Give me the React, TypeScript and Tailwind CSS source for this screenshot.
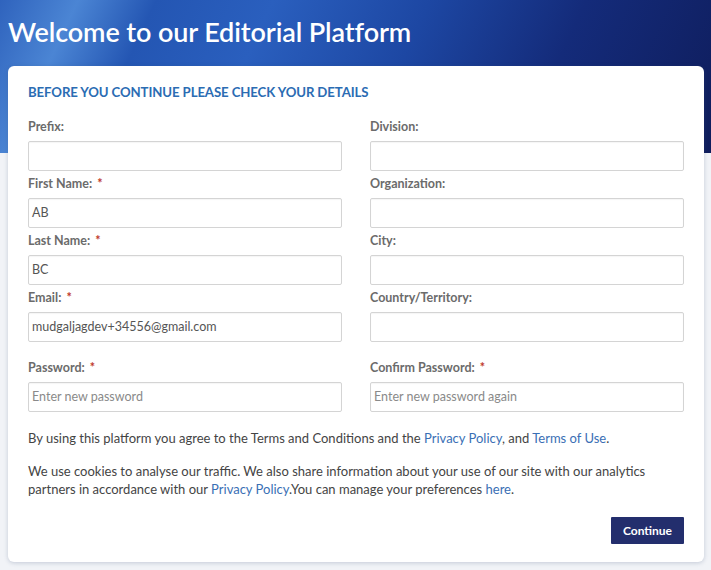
import React from "react";

const font = { fontFamily: "Lato, 'Noto Sans', sans-serif" };

function Field({ label, required, value, placeholder }: { label: string; required?: boolean; value?: string; placeholder?: string }) {
  return (
    <div className="flex flex-col">
      <div className="h-[14px] flex items-center text-[12.5px] font-bold text-[#6b6b6b] leading-none">
        {label}
        {required && <span className="ml-[5px] text-[#c0392b]">*</span>}
      </div>
      <div className="mt-[7px] h-[30px] border border-[#d4d4d4] rounded-[2px] bg-white shadow-[inset_0_1px_1px_rgba(0,0,0,0.04)] flex items-center px-[3px] text-[12.5px]">
        {value ? (
          <span className="text-[#555]">{value}</span>
        ) : placeholder ? (
          <span className="text-[#8a8a8a]">{placeholder}</span>
        ) : null}
      </div>
    </div>
  );
}

export default function App() {
  return (
    <div
      className="w-[711px] h-[570px] bg-[#f1f3f7] bg-no-repeat bg-[length:100%_153px] bg-[linear-gradient(115deg,#2f63bd_0%,#4b85d4_10%,#2456b3_20%,#2a5fbe_35%,#1d47a3_55%,#142b7a_75%,#0f1d5c_100%)] overflow-hidden"
      style={font}
    >
      <div className="h-[66px] pl-[8px] pt-[14px]">
        <h1 className="text-[27px] font-semibold text-white leading-[36px] tracking-[-0.1px]">Welcome to our Editorial Platform</h1>
      </div>
      <div className="mx-[8px] w-[696px] h-[496px] bg-white rounded-[6px] shadow-[0_1px_4px_rgba(60,80,120,0.25)] px-[20px] pt-[18px]">
        <h2 className="text-[13.2px] font-bold text-[#2b6cb3] leading-[16px] tracking-[-0.1px]">BEFORE YOU CONTINUE PLEASE CHECK YOUR DETAILS</h2>
        <div className="mt-[20px] grid grid-cols-2 gap-x-[28px] gap-y-[6px]">
          <Field label="Prefix:" />
          <Field label="Division:" />
          <Field label="First Name:" required value="AB" />
          <Field label="Organization:" />
          <Field label="Last Name:" required value="BC" />
          <Field label="City:" />
          <Field label="Email:" required value="mudgaljagdev+34556@gmail.com" />
          <Field label="Country/Territory:" />
          <div className="mt-[13px]">
            <Field label="Password:" required placeholder="Enter new password" />
          </div>
          <div className="mt-[13px]">
            <Field label="Confirm Password:" required placeholder="Enter new password again" />
          </div>
        </div>
        <p className="mt-[17px] text-[13px] text-[#444] leading-[18px]">
          By using this platform you agree to the Terms and Conditions and the <span className="text-[#3a6fb5]">Privacy Policy</span>, and <span className="text-[#3a6fb5]">Terms of Use</span>.
        </p>
        <p className="mt-[15px] max-w-[625px] text-[13px] text-[#444] leading-[18px]">
          We use cookies to analyse our traffic. We also share information about your use of our site with our analytics partners in accordance with our <span className="text-[#3a6fb5]">Privacy Policy</span>.You can manage your preferences <span className="text-[#3a6fb5]">here</span>.
        </p>
        <div className="mt-[19px] flex justify-end">
          <button className="w-[73px] h-[27px] bg-[#232e6d] text-white text-[12px] font-bold rounded-[1px]">Continue</button>
        </div>
      </div>
    </div>
  );
}
